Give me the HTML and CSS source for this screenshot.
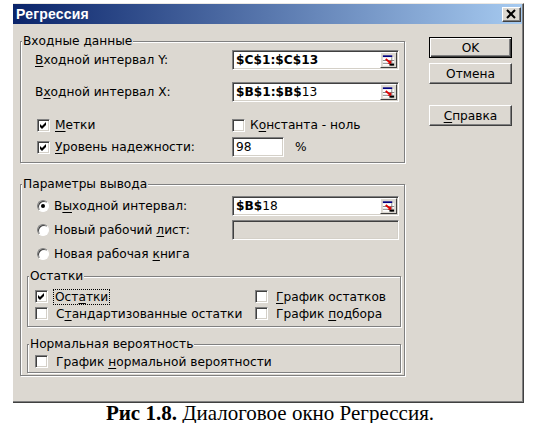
FILE: index.html
```html
<!DOCTYPE html>
<html lang="ru">
<head>
<meta charset="utf-8">
<title>Регрессия</title>
<link rel="stylesheet" href="styles.css">
</head>
<body>
<div class="dialog">
  <div class="titlebar">
    <span class="title">Регрессия</span>
    <span class="close"><svg width="13" height="11" viewBox="0 0 13 11"><path d="M2 1 L10 9 M10 1 L2 9" stroke="#000" stroke-width="2" fill="none"/></svg></span>
  </div>
  <div class="body">
    <div class="main">
      <div class="group g1">
        <div class="legend">Входные данные</div>
        <div class="row r-field r-first">
          <span class="lbl"><u>В</u>ходной интервал Y:</span>
          <div class="edit"><span class="val"><b>$C$1:$C$13</b></span><span class="pick"><svg width="16" height="15" viewBox="0 0 16 15"><rect x="2" y="2" width="10" height="2" fill="#000080"/><rect x="2" y="4" width="12" height="9" fill="#fff"/><path d="M2 7.5H14M2 10.5H14M11.5 4V13" stroke="#808080" stroke-width="1"/><path d="M5 6 L10 10" stroke="#e00000" stroke-width="2"/><path d="M11 11 L7 11 L11 7 Z" fill="#e00000"/><rect x="9" y="11" width="5" height="2" fill="#000"/></svg></span></div>
        </div>
        <div class="row r-field r-gap">
          <span class="lbl">В<u>х</u>одной интервал X:</span>
          <div class="edit"><span class="val"><b>$B$1:$B$</b>13</span><span class="pick"><svg width="16" height="15" viewBox="0 0 16 15"><rect x="2" y="2" width="10" height="2" fill="#000080"/><rect x="2" y="4" width="12" height="9" fill="#fff"/><path d="M2 7.5H14M2 10.5H14M11.5 4V13" stroke="#808080" stroke-width="1"/><path d="M5 6 L10 10" stroke="#e00000" stroke-width="2"/><path d="M11 11 L7 11 L11 7 Z" fill="#e00000"/><rect x="9" y="11" width="5" height="2" fill="#000"/></svg></span></div>
        </div>
        <div class="row r-check r-gap">
          <span class="opt"><span class="cb"><svg width="9" height="9" viewBox="0 0 9 9"><path d="M1 3 L3 5 L7 1 L7 4 L3 8 L1 6 Z" fill="#000"/></svg></span><span><u>М</u>етки</span></span>
          <span class="opt opt-r"><span class="cb"></span><span>К<u>о</u>нстанта - ноль</span></span>
        </div>
        <div class="row r-check">
          <span class="opt"><span class="cb"><svg width="9" height="9" viewBox="0 0 9 9"><path d="M1 3 L3 5 L7 1 L7 4 L3 8 L1 6 Z" fill="#000"/></svg></span><span><u>У</u>ровень надежности:</span></span>
          <span class="opt opt-r"><span class="edit small"><span class="val">98</span></span><span class="pct">%</span></span>
        </div>
      </div>

      <div class="group g2">
        <div class="legend">Параметры вывода</div>
        <div class="row r-field r-first2">
          <span class="opt"><span class="rb on"></span><span>В<u>ы</u>ходной интервал:</span></span>
          <div class="edit"><span class="val"><b>$B$</b>18</span><span class="pick"><svg width="16" height="15" viewBox="0 0 16 15"><rect x="2" y="2" width="10" height="2" fill="#000080"/><rect x="2" y="4" width="12" height="9" fill="#fff"/><path d="M2 7.5H14M2 10.5H14M11.5 4V13" stroke="#808080" stroke-width="1"/><path d="M5 6 L10 10" stroke="#e00000" stroke-width="2"/><path d="M11 11 L7 11 L11 7 Z" fill="#e00000"/><rect x="9" y="11" width="5" height="2" fill="#000"/></svg></span></div>
        </div>
        <div class="row r-field r-gap4">
          <span class="opt"><span class="rb"></span><span>Новый рабочий <u>л</u>ист:</span></span>
          <div class="edit disabled"></div>
        </div>
        <div class="row r-field r-gap4">
          <span class="opt"><span class="rb"></span><span>Новая рабочая <u>к</u>нига</span></span>
        </div>

        <div class="group sub s1">
          <div class="legend">Остатки</div>
          <div class="subrow sr-first">
            <span class="opt"><span class="cb"><svg width="9" height="9" viewBox="0 0 9 9"><path d="M1 3 L3 5 L7 1 L7 4 L3 8 L1 6 Z" fill="#000"/></svg></span><span class="focus">Ост<u>а</u>тки</span></span>
            <span class="opt"><span class="cb"></span><span><u>Г</u>рафик остатков</span></span>
          </div>
          <div class="subrow">
            <span class="opt"><span class="cb"></span><span>С<u>т</u>андартизованные остатки</span></span>
            <span class="opt"><span class="cb"></span><span>График <u>п</u>одбора</span></span>
          </div>
        </div>

        <div class="group sub s2">
          <div class="legend">Нормальная вероятность</div>
          <div class="subrow sr-first2">
            <span class="opt"><span class="cb"></span><span>График <u>н</u>ормальной вероятности</span></span>
          </div>
        </div>
      </div>
    </div>

    <div class="buttons">
      <div class="btn default"><span>OK</span></div>
      <div class="btn"><span>Отмена</span></div>
      <div class="btn help"><span><u>С</u>правка</span></div>
    </div>
  </div>
</div>
<p class="caption"><b>Рис 1.8.</b> Диалоговое окно Регрессия.</p>
</body>
</html>
```

FILE: styles.css
```css
* { box-sizing: border-box; }

body {
  margin: 0;
  background: #fff;
  font-family: "DejaVu Sans", "Liberation Sans", Arial, sans-serif;
  font-size: 12.2px;
  color: #000;
}

u { text-underline-offset: 2px; text-decoration-thickness: 1px; }

.dialog {
  margin: 3px 0 0 13px;
  width: 511px;
  height: 400px;
  background: #dcd8d1;
  border-top: 1px solid #ebe8e3;
  border-right: 1px solid #404040;
  border-bottom: 1px solid #404040;
  box-shadow: inset -1px -1px 0 #808080;
  display: flex;
  flex-direction: column;
}

.titlebar {
  height: 20px;
  margin-right: 1px;
  background: linear-gradient(to right, #0a246a, #a6caf0);
  display: flex;
  align-items: center;
  justify-content: space-between;
  padding: 0 1px 0 3px;
}

.title {
  color: #fff;
  font-family: "Liberation Sans", Arial, sans-serif;
  font-weight: bold;
  font-size: 14px;
  letter-spacing: 0.2px;
}

.close {
  width: 19px;
  height: 15px;
  background: #dcd8d1;
  border-top: 1px solid #fff;
  border-left: 1px solid #fff;
  border-right: 1px solid #404040;
  border-bottom: 1px solid #404040;
  box-shadow: inset -1px -1px 0 #808080;
  display: flex;
  align-items: center;
  justify-content: center;
}

.body {
  display: flex;
  align-items: flex-start;
  padding: 13px 11px 0 7px;
}

.main {
  width: 385px;
  margin-top: 4px;
}

.group {
  border: 1px solid #808080;
  box-shadow: inset 1px 1px 0 #fff, 1px 1px 0 #fff;
  display: flex;
  flex-direction: column;
}

.legend {
  align-self: flex-start;
  height: 14px;
  line-height: 14px;
  margin: -8px 0 0 1px;
  padding: 0 1px;
  background: #dcd8d1;
}

.row {
  display: grid;
  grid-template-columns: 197px 167px;
  align-items: center;
  padding-left: 14px;
}

.r-field { height: 20px; }
.r-check { height: 22px; }
.r-first { margin-top: 2px; }
.r-gap { margin-top: 12px; }
.r-first2 { margin-top: 5px; }
.r-gap4 { margin-top: 4px; }

.g1 { padding-bottom: 4px; }
.g2 { margin-top: 21px; padding-bottom: 2px; }

.opt {
  display: flex;
  align-items: center;
  gap: 5px;
  white-space: nowrap;
}

.row .opt { margin-left: 2px; }
.row .opt-r { margin-left: 0; }

.cb {
  width: 13px;
  height: 13px;
  flex: none;
  background: #fff;
  border-top: 1px solid #808080;
  border-left: 1px solid #808080;
  border-bottom: 1px solid #fff;
  border-right: 1px solid #fff;
  box-shadow: inset 1px 1px 0 #404040, inset -1px -1px 0 #d4d0c8;
  display: flex;
  align-items: center;
  justify-content: center;
}

.rb {
  width: 12px;
  height: 12px;
  flex: none;
  border-radius: 50%;
  background: #fff;
  border: 1px solid;
  border-color: #808080 #fff #fff #808080;
  box-shadow: inset 1px 1px 0 #404040;
  display: flex;
  align-items: center;
  justify-content: center;
}

.rb.on::after {
  content: "";
  width: 4px;
  height: 4px;
  border-radius: 50%;
  background: #000;
}

.edit {
  height: 20px;
  background: #fff;
  border-top: 1px solid #808080;
  border-left: 1px solid #808080;
  border-bottom: 1px solid #fff;
  border-right: 1px solid #fff;
  box-shadow: inset 1px 1px 0 #404040, inset -1px -1px 0 #d4d0c8;
  display: flex;
  align-items: center;
  justify-content: space-between;
  padding: 1px 1px 1px 3px;
}

.edit.disabled { background: #dcd8d1; }

.edit.small { width: 52px; height: 20px; }

.val { white-space: nowrap; }

.pick {
  width: 17px;
  height: 16px;
  flex: none;
  background: #dcd8d1;
  border-top: 1px solid #fff;
  border-left: 1px solid #fff;
  border-right: 1px solid #404040;
  border-bottom: 1px solid #404040;
  display: flex;
  align-items: center;
  justify-content: center;
  overflow: hidden;
}

.pct { margin-left: 6px; }

.sub {
  margin: 0 3px 0 6px;
  padding-left: 7px;
}

.s1 { margin-top: 12px; padding-bottom: 4px; }
.s2 { margin-top: 17px; padding-bottom: 2px; }

.sub .legend { margin-left: -6px; }

.sub .opt { gap: 8px; }

.subrow {
  display: grid;
  grid-template-columns: 220px auto;
  height: 17px;
  align-items: center;
}

.sr-first { margin-top: 5px; }
.sr-first2 { margin-top: 2px; }

.focus {
  outline: 1px dotted #000;
  outline-offset: 0;
  padding: 0 1px;
  margin-left: -2px;
}

.buttons {
  margin-left: 24px;
  width: 83px;
  display: flex;
  flex-direction: column;
}

.btn {
  height: 21px;
  background: #dcd8d1;
  border-top: 1px solid #fff;
  border-left: 1px solid #fff;
  border-right: 1px solid #404040;
  border-bottom: 1px solid #404040;
  box-shadow: inset -1px -1px 0 #808080;
  display: flex;
  align-items: center;
  justify-content: center;
  margin-top: 5px;
}

.btn.default {
  margin-top: 0;
  border: 1px solid #000;
  box-shadow: inset 1px 1px 0 #fff, inset -1px -1px 0 #404040, inset -2px -2px 0 #808080;
}

.btn.help { margin-top: 21px; }

.caption {
  margin: 0;
  text-align: center;
  font-family: "Liberation Serif", "Times New Roman", serif;
  font-size: 21px;
  line-height: 20px;
  padding-left: 6px;
}
```
